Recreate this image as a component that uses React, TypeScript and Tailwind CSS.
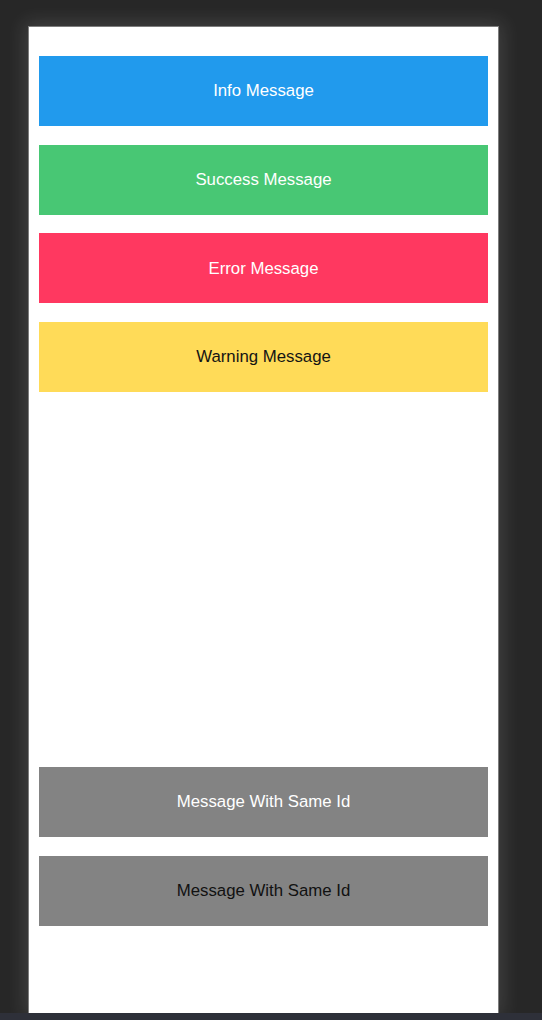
import React from 'react';

type Msg = { text: string; bg: string; fg: string };

const top: Msg[] = [
  { text: 'Info Message', bg: 'bg-[#219aed]', fg: 'text-white' },
  { text: 'Success Message', bg: 'bg-[#48c774]', fg: 'text-white' },
  { text: 'Error Message', bg: 'bg-[#ff3860]', fg: 'text-white' },
  { text: 'Warning Message', bg: 'bg-[#ffdb58]', fg: 'text-[#141414]' },
];

const bottom: Msg[] = [
  { text: 'Message With Same Id', bg: 'bg-[#838383]', fg: 'text-white' },
  { text: 'Message With Same Id', bg: 'bg-[#838383]', fg: 'text-[#111111]' },
];

const Toast: React.FC<{ m: Msg }> = ({ m }) => (
  <div className={`h-[70px] flex items-center justify-center text-[16.8px] ${m.bg} ${m.fg}`}>
    {m.text}
  </div>
);

const App: React.FC = () => {
  return (
    <div
      className="w-[542px] h-[1020px] flex flex-col bg-[#272727] overflow-hidden"
      style={{ fontFamily: '"Liberation Sans", Arial, sans-serif' }}
    >
      <div className="flex-1 pt-[26px] pl-[28px]">
        {/* phone frame */}
        <div className="w-[471px] h-[987px] bg-white border border-b-0 border-[#7d7d7d] shadow-[0_0_18px_4px_rgba(255,255,255,0.12)] flex flex-col justify-between px-[10px] pt-[29px] pb-[87px]">
          <div className="flex flex-col gap-[18.7px]">
            {top.map((m) => (
              <Toast key={m.text} m={m} />
            ))}
          </div>
          <div className="flex flex-col gap-[19px]">
            {bottom.map((m, i) => (
              <Toast key={i} m={m} />
            ))}
          </div>
        </div>
      </div>
      <div className="h-[7px] bg-[#2e3039]" />
    </div>
  );
};

export default App;
